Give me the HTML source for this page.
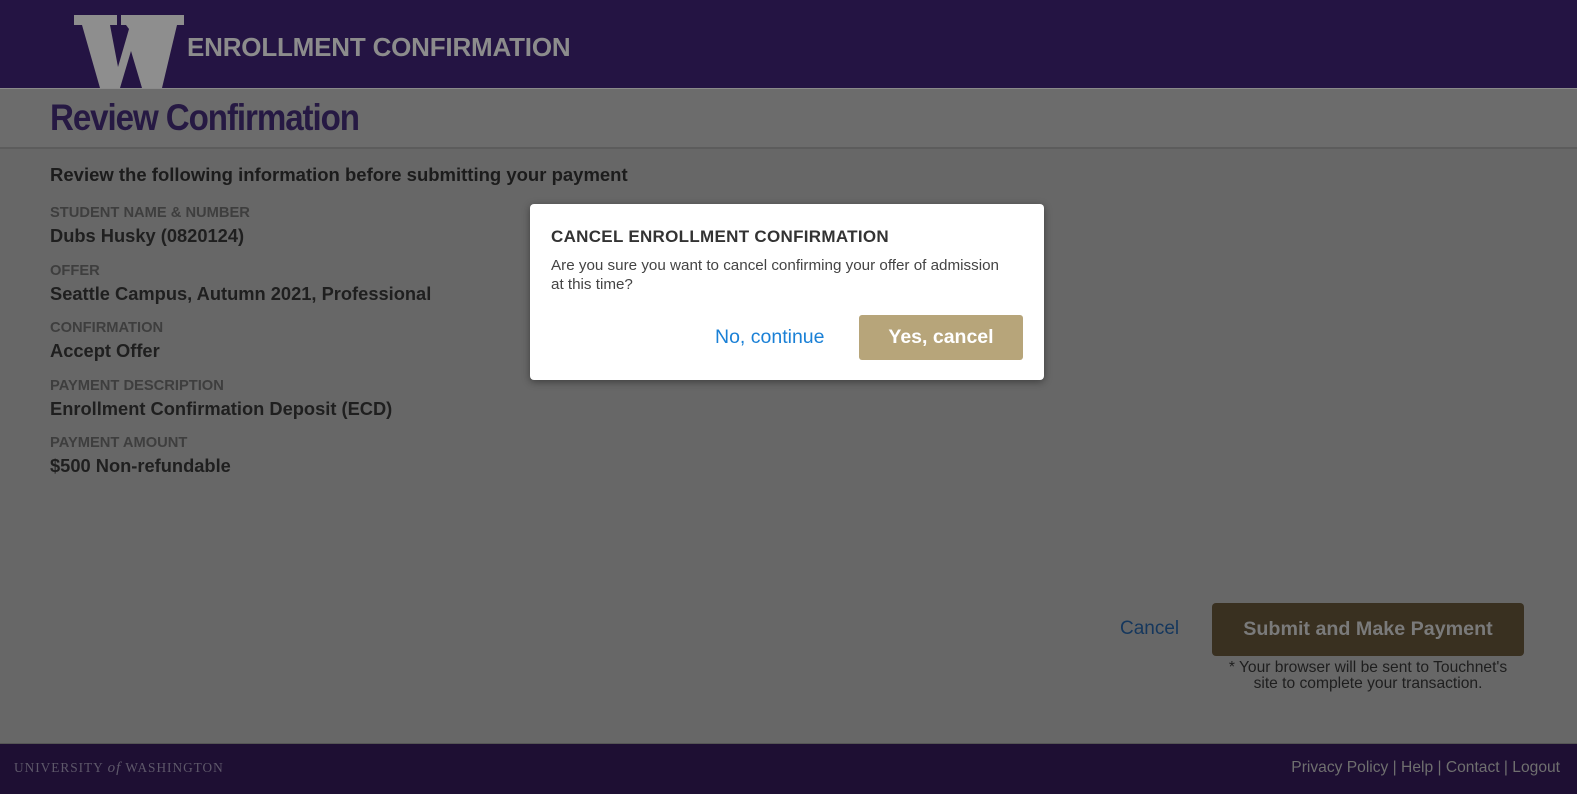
<!DOCTYPE html>
<html><head><meta charset="utf-8"><style>
*{margin:0;padding:0;box-sizing:border-box}
body{width:1577px;height:794px;overflow:hidden;background:#676767;font-family:"Liberation Sans",sans-serif;position:relative}
.hdr{position:absolute;left:0;top:0;width:1577px;height:88px;background:#241443}
.hdr .t{position:absolute;left:187px;top:32px;font-size:26px;font-weight:bold;color:#8c8c8c;letter-spacing:-0.2px}
.band{position:absolute;left:0;top:88px;width:1577px;height:61px;background:#6c6c6c;border-top:1px solid #8a8a8a;border-bottom:2px solid #5c5c5c}
.band h1{position:absolute;left:50px;top:8px;font-size:37px;color:#261943;font-weight:bold;letter-spacing:-1.2px;transform:scaleX(0.895);transform-origin:left}
.intro{position:absolute;left:50px;top:164px;font-size:18.5px;font-weight:bold;color:#1c1c1c}
.f{position:absolute;left:50px}
.lbl{font-size:14.7px;font-weight:bold;color:#3e3e3e;line-height:17px}
.val{font-size:18.3px;font-weight:bold;color:#1f1f1f;line-height:22px;margin-top:3px}
.cancel{position:absolute;left:1120px;top:618px;font-size:19px;color:#15375d}
.submit{position:absolute;left:1212px;top:603px;width:312px;height:53px;background:#393020;border-radius:4px;color:#7a7a7a;font-weight:bold;font-size:19.7px;text-align:center;line-height:53px}
.note{position:absolute;left:1190px;top:660px;width:356px;text-align:center;font-size:15.6px;color:#1e1e1e;line-height:16px}
.ftr{position:absolute;left:0;top:743px;width:1577px;height:51px;background:#1e0f33;border-top:1px solid #555}
.uw{position:absolute;left:14px;top:16px;font-family:"Liberation Serif",serif;font-size:13.3px;color:#5e586a;letter-spacing:1px}
.links{position:absolute;right:17px;top:15px;font-size:15.6px;color:#6f6f6f}
.modal{position:absolute;left:530px;top:204px;width:514px;height:176px;background:#fff;border-radius:4px;box-shadow:0 2px 8px rgba(0,0,0,.4)}
.modal h2{position:absolute;left:21px;top:23px;font-size:17px;font-weight:bold;color:#333;letter-spacing:0.3px}
.modal p{position:absolute;left:21px;top:52px;width:462px;font-size:15.2px;color:#444;line-height:19px}
.no{position:absolute;left:185px;top:122px;font-size:19.5px;color:#1a80d6}
.yes{position:absolute;left:329px;top:111px;width:164px;height:45px;background:#b7a57a;border-radius:3px;color:#fff;font-weight:bold;font-size:19.5px;text-align:center;line-height:45px}
</style></head><body>
<div class="hdr">
<svg style="position:absolute;left:74px;top:15px" width="110" height="73" viewBox="0 0 110 73"><path fill="#8e8e8e" d="M0 0H43V10H36L44 52L55 14L52 10H47V0H110V10H103L88 73H68L57 36L46 73H26L8 10H0Z"/></svg>
<div class="t">ENROLLMENT CONFIRMATION</div></div>
<div class="band"><h1>Review Confirmation</h1></div>
<div class="intro">Review the following information before submitting your payment</div>
<div class="f" style="top:205px"><div class="lbl">STUDENT NAME &amp; NUMBER</div><div class="val">Dubs Husky (0820124)</div></div>
<div class="f" style="top:263px"><div class="lbl">OFFER</div><div class="val">Seattle Campus, Autumn 2021, Professional</div></div>
<div class="f" style="top:320px"><div class="lbl">CONFIRMATION</div><div class="val">Accept Offer</div></div>
<div class="f" style="top:378px"><div class="lbl">PAYMENT DESCRIPTION</div><div class="val">Enrollment Confirmation Deposit (ECD)</div></div>
<div class="f" style="top:435px"><div class="lbl">PAYMENT AMOUNT</div><div class="val">$500 Non-refundable</div></div>
<div class="cancel">Cancel</div>
<div class="submit">Submit and Make Payment</div>
<div class="note">* Your browser will be sent to Touchnet's<br>site to complete your transaction.</div>
<div class="ftr"><div class="uw">UNIVERSITY <i style="font-size:15px">of</i> WASHINGTON</div>
<div class="links">Privacy Policy | Help | Contact | Logout</div></div>
<div class="modal"><h2>CANCEL ENROLLMENT CONFIRMATION</h2>
<p>Are you sure you want to cancel confirming your offer of admission at this time?</p>
<div class="no">No, continue</div><div class="yes">Yes, cancel</div></div>
</body></html>
